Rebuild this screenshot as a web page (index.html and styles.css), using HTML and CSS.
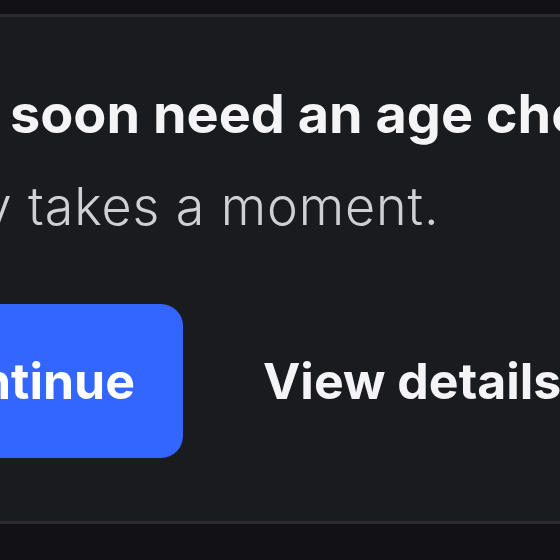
FILE: index.html
```html
<!DOCTYPE html>
<html lang="en">
<head>
<meta charset="utf-8">
<link rel="stylesheet" href="styles.css">
</head>
<body>
<div class="top"></div>
<section class="panel">
  <h2 class="line title"><span class="pre"><span>You'll </span></span><span class="vis">soon need an age check</span></h2>
  <p class="line sub"><span class="pre"><span>It only </span></span><span class="vis">takes a moment.</span></p>
  <div class="actions">
    <span class="pre btn-anchor"><button class="btn primary">Continue</button></span>
    <button class="btn link">View details</button>
  </div>
</section>
<div class="bottom"></div>
</body>
</html>
```
FILE: styles.css
```css
html, body {
  margin: 0;
  padding: 0;
}
body {
  width: 560px;
  height: 560px;
  overflow: hidden;
  background: #121216;
  font-family: "Inter", "Noto Sans", sans-serif;
  display: flex;
  flex-direction: column;
}
.top {
  height: 14px;
  flex: none;
  background: #121216;
}
.panel {
  flex: none;
  height: 510px;
  box-sizing: border-box;
  background: #1a1b1f;
  border-top: 3px solid #2b2c31;
  border-bottom: 3px solid #2b2c31;
  display: flex;
  flex-direction: column;
}
.bottom {
  flex: 1;
  background: #121216;
}
.line {
  display: flex;
  margin: 0;
  white-space: pre;
}
.pre {
  width: 0;
  display: flex;
  justify-content: flex-end;
  white-space: pre;
  flex: none;
}
.title {
  margin-top: 65px;
  margin-left: 10px;
  font-size: 54px;
  font-weight: 700;
  color: #f4f4f6;
  line-height: 64px;
}
.sub {
  margin-top: 31px;
  margin-left: 28px;
  font-size: 52px;
  font-weight: 300;
  letter-spacing: 0.9px;
  color: #cfd0d4;
  line-height: 60px;
}
.actions {
  display: flex;
  align-items: center;
  margin-top: 67px;
  margin-left: 183px;
  gap: 80px;
}
.btn-anchor {
  align-items: center;
}
.btn {
  font-family: inherit;
  font-size: 50px;
  font-weight: 700;
  border: 0;
  white-space: nowrap;
  padding: 0;
  cursor: pointer;
}
.primary {
  flex: none;
  height: 154px;
  padding: 0 48px;
  background: #3366ff;
  color: #ffffff;
  border-radius: 22px;
}
.link {
  background: transparent;
  color: #f4f4f6;
}
```
